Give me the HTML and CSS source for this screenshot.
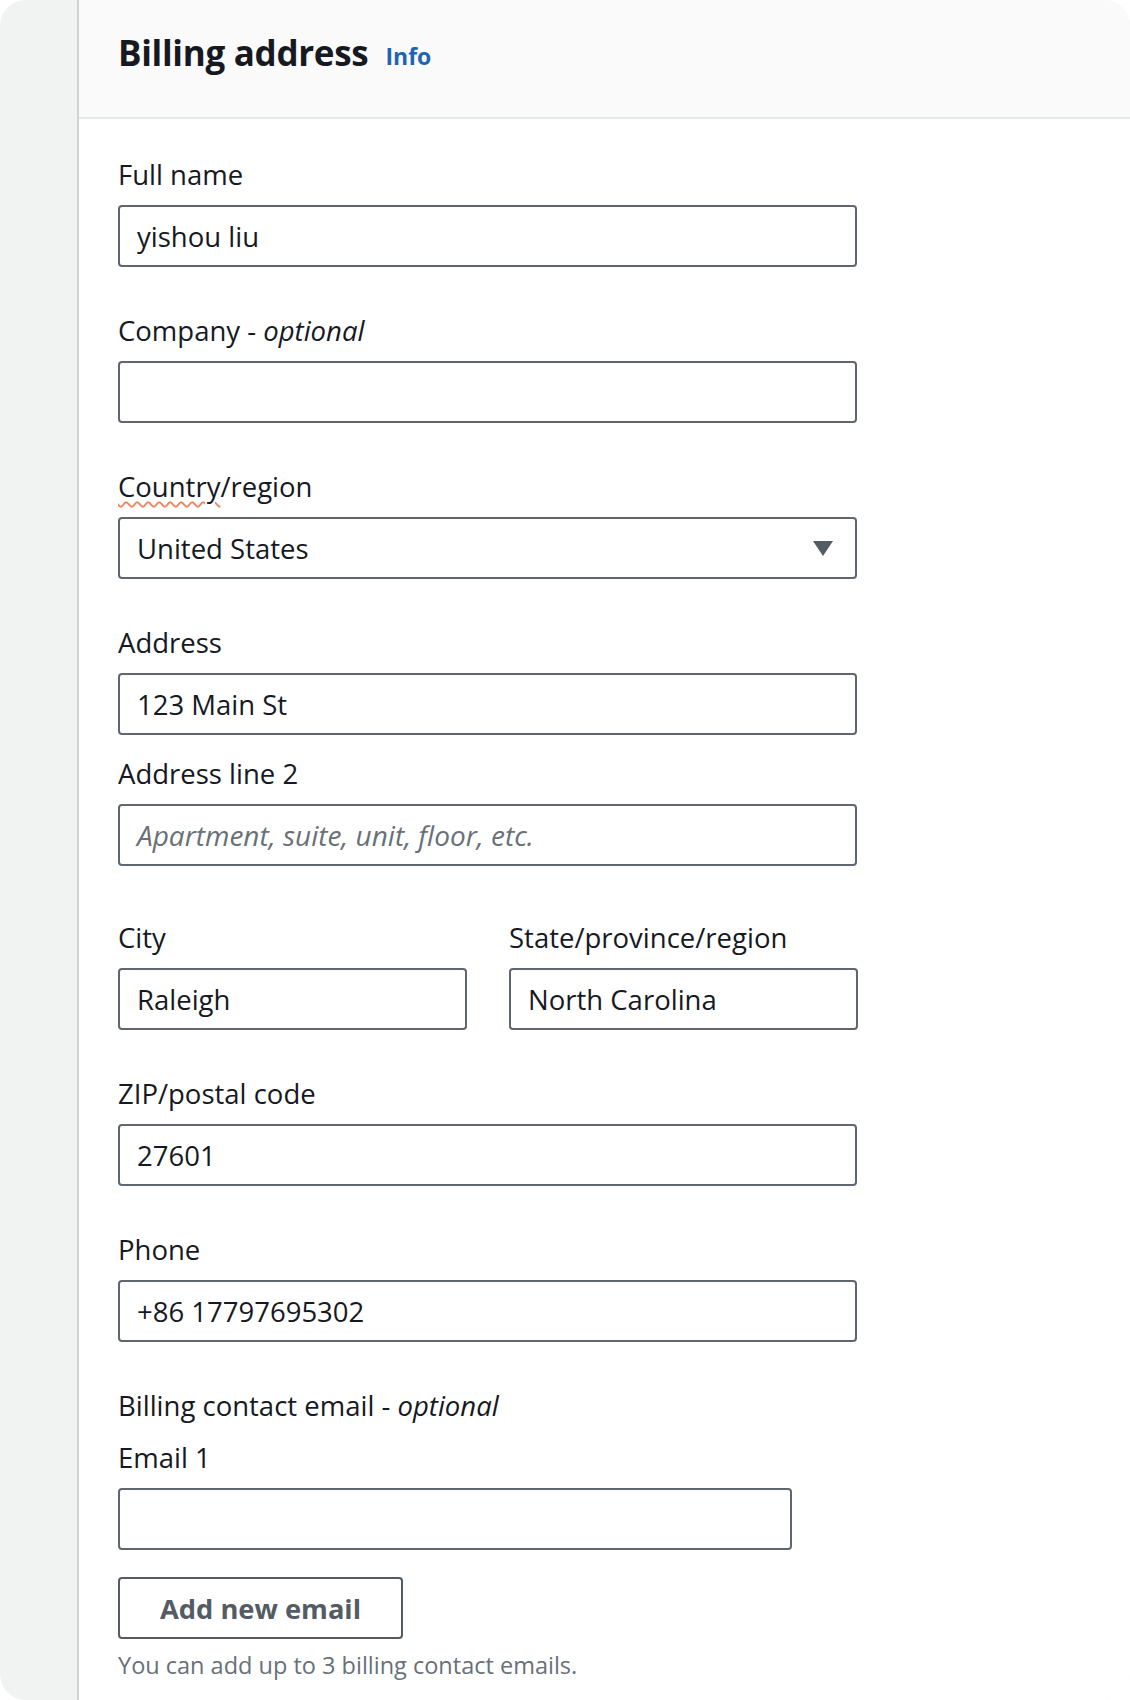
FILE: index.html
```html
<!DOCTYPE html>
<html lang="en">
<head>
<meta charset="utf-8">
<title>Billing address</title>
<link rel="stylesheet" href="styles.css">
</head>
<body>
<div class="frame">
  <div class="side"></div>
  <section class="panel">
    <header class="panel-header">
      <h2 class="title">Billing address</h2>
      <a class="info" href="#">Info</a>
    </header>
    <div class="panel-body">
      <div class="field">
        <label class="label">Full name</label>
        <div class="input">yishou liu</div>
      </div>
      <div class="field">
        <label class="label">Company - <i>optional</i></label>
        <div class="input"></div>
      </div>
      <div class="field">
        <label class="label"><span class="spell">Country</span>/region</label>
        <div class="input select">United States<span class="caret"></span></div>
      </div>
      <div class="field tight">
        <label class="label">Address</label>
        <div class="input">123 Main St</div>
      </div>
      <div class="field wide">
        <label class="label">Address line 2</label>
        <div class="input placeholder">Apartment, suite, unit, floor, etc.</div>
      </div>
      <div class="field cols">
        <div class="col">
          <label class="label">City</label>
          <div class="input">Raleigh</div>
        </div>
        <div class="col">
          <label class="label">State/province/region</label>
          <div class="input">North Carolina</div>
        </div>
      </div>
      <div class="field">
        <label class="label">ZIP/postal code</label>
        <div class="input">27601</div>
      </div>
      <div class="field">
        <label class="label">Phone</label>
        <div class="input">+86 17797695302</div>
      </div>
      <div class="field email">
        <div class="label group">Billing contact email - <i>optional</i></div>
        <label class="label">Email 1</label>
        <div class="input short"></div>
        <button class="btn" type="button">Add new email</button>
        <p class="help">You can add up to 3 billing contact emails.</p>
      </div>
    </div>
  </section>
</div>
</body>
</html>
```

FILE: styles.css
```css
html, body {
  margin: 0;
  padding: 0;
  background: #ffffff;
}
body {
  width: 1130px;
  height: 1700px;
  overflow: hidden;
  font-family: "Open Sans", "Liberation Sans", sans-serif;
  color: #16191f;
}
.frame {
  display: flex;
  width: 1130px;
  height: 1700px;
  border-radius: 26px;
  overflow: hidden;
  background: #f1f2f2;
}
.side {
  width: 77px;
  flex: none;
}
.panel {
  flex: 1;
  background: #ffffff;
  border-left: 2px solid #cfd3d3;
  border-top-right-radius: 26px;
  display: flex;
  flex-direction: column;
}
.panel-header {
  flex: none;
  height: 119px;
  box-sizing: border-box;
  background: #fafafa;
  border-bottom: 2px solid #e6e9e9;
  border-top-right-radius: 26px;
  display: flex;
  align-items: center;
  padding: 0 0 12px 39px;
  gap: 17px;
}
.title {
  margin: 0;
  font-size: 35px;
  font-weight: 700;
  letter-spacing: -0.3px;
}
.info {
  color: #1f64b2;
  font-weight: 700;
  font-size: 23px;
  text-decoration: none;
  padding-top: 6px;
}
.panel-body {
  flex: none;
  padding: 36px 0 0 39px;
  display: flex;
  flex-direction: column;
}
.field {
  flex: none;
  display: flex;
  flex-direction: column;
  margin-bottom: 44px;
}
.field.tight { margin-bottom: 19px; }
.field.wide { margin-bottom: 52px; }
.label {
  display: block;
  font-size: 27.5px;
  line-height: 40px;
  margin-bottom: 10px;
}
.label.group { margin-bottom: 12px; }
.label i { font-style: italic; }
.spell {
  text-decoration: underline wavy #f0865f;
  text-decoration-thickness: 1.5px;
  text-underline-offset: 4px;
}
.input {
  width: 739px;
  height: 62px;
  box-sizing: border-box;
  border: 2px solid #5f6670;
  border-radius: 4px;
  padding: 0 17px;
  display: flex;
  align-items: center;
  font-size: 27.5px;
  color: #16191f;
}
.input.placeholder {
  color: #687078;
  font-style: italic;
  font-size: 28px;
}
.input.short { width: 674px; }
.select {
  justify-content: space-between;
}
.caret {
  width: 0;
  height: 0;
  border-left: 10px solid transparent;
  border-right: 10px solid transparent;
  border-top: 15px solid #545b64;
  margin-right: 5px;
}
.cols {
  flex-direction: row;
  gap: 42px;
}
.col {
  display: flex;
  flex-direction: column;
}
.col .input { width: 349px; }
.btn {
  margin-top: 27px;
  width: 285px;
  height: 62px;
  border: 2px solid #545b64;
  border-radius: 4px;
  background: #ffffff;
  color: #545b64;
  font-family: "Open Sans", "Liberation Sans", sans-serif;
  font-weight: 700;
  font-size: 27.3px;
  padding: 0;
  text-align: center;
}
.help {
  margin: 9px 0 0;
  font-size: 23.5px;
  line-height: 34px;
  color: #687078;
}
```
